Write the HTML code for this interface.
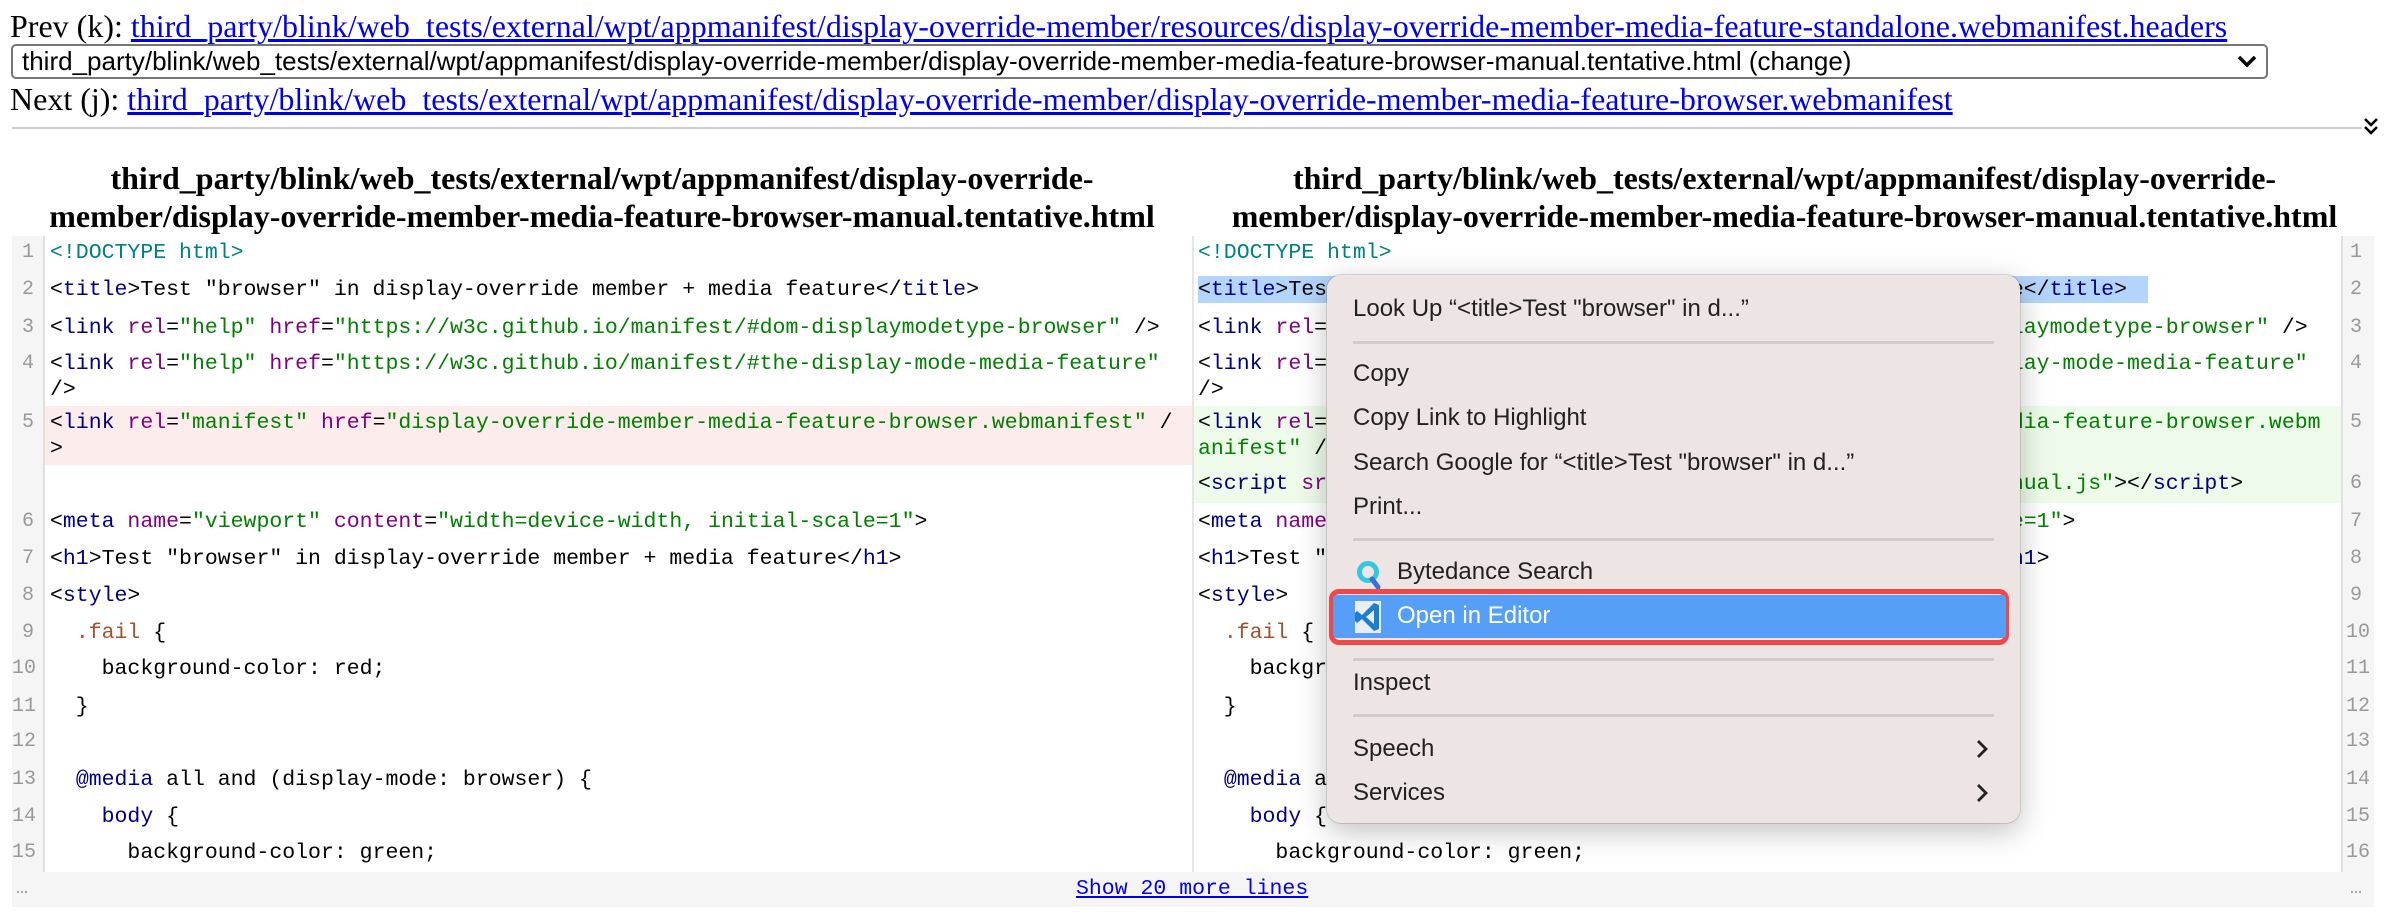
<!DOCTYPE html>
<html><head><meta charset="utf-8"><style>
*{margin:0;padding:0;box-sizing:border-box}
body{width:2386px;height:922px;background:#fff;position:relative;overflow:hidden;font-family:"Liberation Serif",serif;color:#000}
.a{position:absolute;white-space:pre}
.nav{font-size:32px;line-height:36px}
.nav a{color:#0000ee;text-decoration:underline}
.sel{position:absolute;left:11px;top:44px;width:2257px;height:35px;border:2px solid #767676;border-radius:5px;font-family:"Liberation Sans",sans-serif;font-size:26px;line-height:31px;padding-left:9px;white-space:pre}
h2{position:absolute;font-size:32px;line-height:38px;text-align:center;font-weight:bold}
.code{font-family:"Liberation Mono",monospace;font-size:21.5px;line-height:26px}
.gut{position:absolute;background:#f5f5f5;top:236px;height:671px;width:33px}
.ln{font-family:"Liberation Mono",monospace;font-size:20px;color:#999;position:absolute;line-height:26px}
.t{color:#000080}.at{color:#800080}.v{color:#008000}.d{color:#008080}.cl{color:#a0522d}
.menu{position:absolute;left:1327px;top:275px;width:693px;height:548px;background:#ede5e3;border-radius:14px;box-shadow:0 8px 30px rgba(0,0,0,.25),0 0 0 1px rgba(0,0,0,.12);font-family:"Liberation Sans",sans-serif;font-size:24px;color:#222}
.mi{position:absolute;left:26px;line-height:30px;white-space:pre}
.sep{position:absolute;left:26px;width:641px;height:3px;background:#d3cccb}
</style></head><body>
<div class="a nav" style="left:10px;top:8px">Prev (k): <a>third_party/blink/web_tests/external/wpt/appmanifest/display-override-member/resources/display-override-member-media-feature-standalone.webmanifest.headers</a></div>
<div class="sel">third_party/blink/web_tests/external/wpt/appmanifest/display-override-member/display-override-member-media-feature-browser-manual.tentative.html (change)</div>
<svg class="a" style="left:2236px;top:53px" width="22" height="16" viewBox="0 0 22 16"><path d="M3 4l8 8 8-8" stroke="#000" stroke-width="3.5" fill="none"/></svg>
<div class="a nav" style="left:10px;top:81px">Next (j): <a>third_party/blink/web_tests/external/wpt/appmanifest/display-override-member/display-override-member-media-feature-browser.webmanifest</a></div>
<div class="a" style="left:12px;top:127px;width:2350px;height:2px;background:#ccc"></div>
<svg class="a" style="left:2362px;top:116px" width="18" height="22" viewBox="0 0 18 22"><path d="M3 3l6 6 6-6M3 11l6 6 6-6" stroke="#000" stroke-width="2.5" fill="none"/></svg>

<h2 style="left:12px;width:1180px;top:159px">third_party/blink/web_tests/external/wpt/appmanifest/display-override-<br>member/display-override-member-media-feature-browser-manual.tentative.html</h2>
<h2 style="left:1198px;width:1173px;top:159px">third_party/blink/web_tests/external/wpt/appmanifest/display-override-<br>member/display-override-member-media-feature-browser-manual.tentative.html</h2>

<div class="a" style="left:45px;top:406px;width:1147px;height:59px;background:#fdecec"></div>
<div class="a" style="left:1194px;top:406px;width:1147px;height:97px;background:#eefbea"></div>
<div class="a" style="left:1198px;top:276px;width:950px;height:27px;background:#b3d4fc"></div>
<div class="gut" style="left:12px;border-right:2px solid #e0e0e0"></div>
<div class="gut" style="left:2341px;border-left:2px solid #e0e0e0"></div>
<div class="a" style="left:1192px;top:236px;width:2px;height:636px;background:#e6e6e6"></div>
<div class="a" style="left:12px;top:872px;width:2359px;height:35px;background:#f5f5f5"></div>

<div class="ln" style="left:22px;top:240px">1</div>
<div class="ln" style="left:22px;top:277px">2</div>
<div class="ln" style="left:22px;top:315px">3</div>
<div class="ln" style="left:22px;top:351px">4</div>
<div class="ln" style="left:22px;top:410px">5</div>
<div class="ln" style="left:22px;top:509px">6</div>
<div class="ln" style="left:22px;top:546px">7</div>
<div class="ln" style="left:22px;top:583px">8</div>
<div class="ln" style="left:22px;top:620px">9</div>
<div class="ln" style="left:12px;top:656px">10</div>
<div class="ln" style="left:12px;top:694px">11</div>
<div class="ln" style="left:12px;top:729px">12</div>
<div class="ln" style="left:12px;top:767px">13</div>
<div class="ln" style="left:12px;top:804px">14</div>
<div class="ln" style="left:12px;top:840px">15</div>
<div class="ln" style="left:16px;top:876px">…</div>

<div class="a code" style="left:50px;top:240px"><span class="d">&lt;!DOCTYPE html&gt;</span></div>
<div class="a code" style="left:50px;top:277px">&lt;<span class="t">title</span>&gt;Test "browser" in display-override member + media feature&lt;/<span class="t">title</span>&gt;</div>
<div class="a code" style="left:50px;top:315px">&lt;<span class="t">link</span> <span class="at">rel</span>=<span class="v">"help"</span> <span class="at">href</span>=<span class="v">"https://w3c.github.io/manifest/#dom-displaymodetype-browser"</span> /&gt;</div>
<div class="a code" style="left:50px;top:351px">&lt;<span class="t">link</span> <span class="at">rel</span>=<span class="v">"help"</span> <span class="at">href</span>=<span class="v">"https://w3c.github.io/manifest/#the-display-mode-media-feature"</span>
/&gt;</div>
<div class="a code" style="left:50px;top:410px">&lt;<span class="t">link</span> <span class="at">rel</span>=<span class="v">"manifest"</span> <span class="at">href</span>=<span class="v">"display-override-member-media-feature-browser.webmanifest"</span> /
&gt;</div>
<div class="a code" style="left:50px;top:509px">&lt;<span class="t">meta</span> <span class="at">name</span>=<span class="v">"viewport"</span> <span class="at">content</span>=<span class="v">"width=device-width, initial-scale=1"</span>&gt;</div>
<div class="a code" style="left:50px;top:546px">&lt;<span class="t">h1</span>&gt;Test "browser" in display-override member + media feature&lt;/<span class="t">h1</span>&gt;</div>
<div class="a code" style="left:50px;top:583px">&lt;<span class="t">style</span>&gt;</div>
<div class="a code" style="left:50px;top:620px">  <span class="cl">.fail</span> {</div>
<div class="a code" style="left:50px;top:656px">    background-color: red;</div>
<div class="a code" style="left:50px;top:694px">  }</div>
<div class="a code" style="left:50px;top:767px">  <span class="t">@media</span> all and (display-mode: browser) {</div>
<div class="a code" style="left:50px;top:804px">    <span class="t">body</span> {</div>
<div class="a code" style="left:50px;top:840px">      background-color: green;</div>

<div class="ln" style="left:2350px;top:240px">1</div>
<div class="ln" style="left:2350px;top:277px">2</div>
<div class="ln" style="left:2350px;top:315px">3</div>
<div class="ln" style="left:2350px;top:351px">4</div>
<div class="ln" style="left:2350px;top:410px">5</div>
<div class="ln" style="left:2350px;top:471px">6</div>
<div class="ln" style="left:2350px;top:509px">7</div>
<div class="ln" style="left:2350px;top:546px">8</div>
<div class="ln" style="left:2350px;top:583px">9</div>
<div class="ln" style="left:2346px;top:620px">10</div>
<div class="ln" style="left:2346px;top:656px">11</div>
<div class="ln" style="left:2346px;top:694px">12</div>
<div class="ln" style="left:2346px;top:729px">13</div>
<div class="ln" style="left:2346px;top:767px">14</div>
<div class="ln" style="left:2346px;top:804px">15</div>
<div class="ln" style="left:2346px;top:840px">16</div>
<div class="ln" style="left:2350px;top:876px">…</div>

<div class="a code" style="left:1198px;top:240px"><span class="d">&lt;!DOCTYPE html&gt;</span></div>
<div class="a code" style="left:1198px;top:277px">&lt;<span class="t">title</span>&gt;Test "browser" in display-override member + media feature&lt;/<span class="t">title</span>&gt;</div>
<div class="a code" style="left:1198px;top:315px">&lt;<span class="t">link</span> <span class="at">rel</span>=<span class="v">"help"</span> <span class="at">href</span>=<span class="v">"https://w3c.github.io/manifest/#dom-displaymodetype-browser"</span> /&gt;</div>
<div class="a code" style="left:1198px;top:351px">&lt;<span class="t">link</span> <span class="at">rel</span>=<span class="v">"help"</span> <span class="at">href</span>=<span class="v">"https://w3c.github.io/manifest/#the-display-mode-media-feature"</span>
/&gt;</div>
<div class="a code" style="left:1198px;top:410px">&lt;<span class="t">link</span> <span class="at">rel</span>=<span class="v">"manifest"</span> <span class="at">href</span>=<span class="v">"resources/display-override-member-media-feature-browser.webm
anifest"</span> /&gt;</div>
<div class="a code" style="left:1198px;top:471px">&lt;<span class="t">script</span> <span class="at">src</span>=<span class="v">"resources/display-override-member-media-feature-manual.js"</span>&gt;&lt;/<span class="t">script</span>&gt;</div>
<div class="a code" style="left:1198px;top:509px">&lt;<span class="t">meta</span> <span class="at">name</span>=<span class="v">"viewport"</span> <span class="at">content</span>=<span class="v">"width=device-width, initial-scale=1"</span>&gt;</div>
<div class="a code" style="left:1198px;top:546px">&lt;<span class="t">h1</span>&gt;Test "browser" in display-override member + media feature&lt;/<span class="t">h1</span>&gt;</div>
<div class="a code" style="left:1198px;top:583px">&lt;<span class="t">style</span>&gt;</div>
<div class="a code" style="left:1198px;top:620px">  <span class="cl">.fail</span> {</div>
<div class="a code" style="left:1198px;top:656px">    background-color: red;</div>
<div class="a code" style="left:1198px;top:694px">  }</div>
<div class="a code" style="left:1198px;top:767px">  <span class="t">@media</span> all and (display-mode: browser) {</div>
<div class="a code" style="left:1198px;top:804px">    <span class="t">body</span> {</div>
<div class="a code" style="left:1198px;top:840px">      background-color: green;</div>

<div class="a code" style="left:1076px;top:876px;color:#0000ee;text-decoration:underline">Show 20 more lines</div>

<div class="menu">
 <div class="mi" style="top:19px">Look Up “&lt;title&gt;Test "browser" in d...”</div>
 <div class="sep" style="top:66px"></div>
 <div class="mi" style="top:84px">Copy</div>
 <div class="mi" style="top:128px">Copy Link to Highlight</div>
 <div class="mi" style="top:173px">Search Google for “&lt;title&gt;Test "browser" in d...”</div>
 <div class="mi" style="top:217px">Print...</div>
 <div class="sep" style="top:263px"></div>
 <svg class="a" style="left:28px;top:285px" width="28" height="30" viewBox="0 0 28 30"><circle cx="13" cy="12" r="8.5" fill="none" stroke="#35c6e0" stroke-width="5"/><path d="M17 19l6 8" stroke="#3a6fd8" stroke-width="5" stroke-linecap="round"/></svg>
 <div class="mi" style="left:70px;top:282px">Bytedance Search</div>
 <div class="a" style="left:2px;top:314px;width:680px;height:56px;border:5px solid #f04848;border-radius:10px"></div>
 <div class="a" style="left:6px;top:320px;width:673px;height:43px;background:#569ff9;border-radius:4px"></div>
 <svg class="a" style="left:28px;top:326px" width="26" height="32" viewBox="0 0 26 32"><rect x="0" y="0" width="26" height="32" fill="#e8eef4"/><path d="M19 2L7 14 2 10 0 12v8l2 2 5-4 12 12 5-2V4z" fill="#1a7fd0"/><path d="M19 9v14l-8-7z" fill="#e8eef4"/></svg>
 <div class="mi" style="left:70px;top:326px;color:#fff">Open in Editor</div>
 <div class="sep" style="top:383px"></div>
 <div class="mi" style="top:393px">Inspect</div>
 <div class="sep" style="top:439px"></div>
 <div class="mi" style="top:459px">Speech</div>
 <div class="mi" style="top:503px">Services</div>
 <svg class="a" style="left:648px;top:463px" width="14" height="22" viewBox="0 0 14 22"><path d="M3 3l8 8-8 8" stroke="#222" stroke-width="2.8" fill="none"/></svg>
 <svg class="a" style="left:648px;top:507px" width="14" height="22" viewBox="0 0 14 22"><path d="M3 3l8 8-8 8" stroke="#222" stroke-width="2.8" fill="none"/></svg>
</div>
</body></html>
